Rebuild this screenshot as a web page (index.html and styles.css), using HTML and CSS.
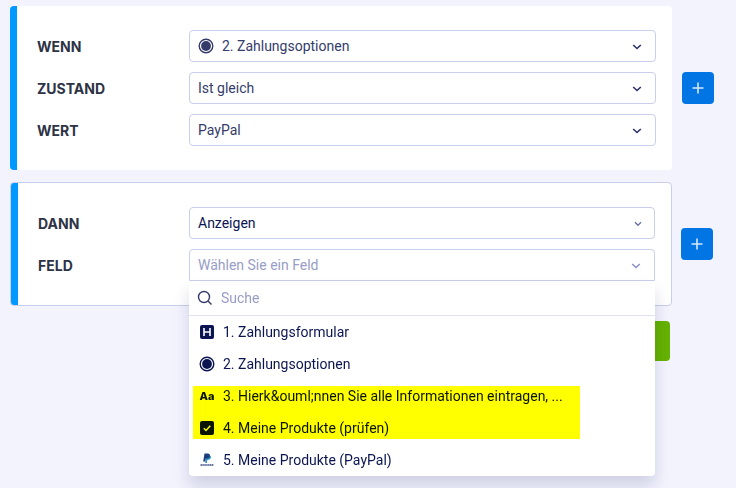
FILE: index.html
```html
<!DOCTYPE html>
<html lang="de">
<head>
    <meta charset="UTF-8">
    <meta name="viewport" content="width=device-width, initial-scale=1.0">
    <title>Bedingungen</title>
    <link rel="stylesheet" href="styles.css">
</head>
<body>
    <form class="conditions">
        <div class="rule">
            <div class="card">
                <div class="field">
                    <label class="label" for="when">WENN</label>
                    <div class="control">
                        <svg class="control-icon" viewBox="0 0 16 16" width="16" height="16"><circle cx="8" cy="8" r="6.8" fill="none" stroke="currentColor" stroke-width="1.4"/><circle cx="8" cy="8" r="4.9" fill="currentColor"/></svg>
                        <select class="select select-with-icon" id="when">
                            <option>2. Zahlungsoptionen</option>
                        </select>
                        <svg class="chevron" viewBox="0 0 10 6" width="10" height="6"><path d="M1.2 1 5 4.5 8.8 1"/></svg>
                    </div>
                </div>
                <div class="field">
                    <label class="label" for="state">ZUSTAND</label>
                    <div class="control">
                        <select class="select" id="state">
                            <option>Ist gleich</option>
                        </select>
                        <svg class="chevron" viewBox="0 0 10 6" width="10" height="6"><path d="M1.2 1 5 4.5 8.8 1"/></svg>
                    </div>
                </div>
                <div class="field">
                    <label class="label" for="value">WERT</label>
                    <div class="control">
                        <select class="select" id="value">
                            <option>PayPal</option>
                        </select>
                        <svg class="chevron" viewBox="0 0 10 6" width="10" height="6"><path d="M1.2 1 5 4.5 8.8 1"/></svg>
                    </div>
                </div>
            </div>
            <button class="add-button" type="button" aria-label="Bedingung hinzufügen">
                <svg viewBox="0 0 12 12" width="12" height="12"><path d="M6 .5v11M.5 6h11"/></svg>
            </button>
        </div>

        <div class="rule rule-then">
            <div class="card card-active">
                <div class="field">
                    <label class="label" for="then">DANN</label>
                    <div class="control">
                        <select class="select" id="then">
                            <option>Anzeigen</option>
                        </select>
                        <svg class="chevron chevron-thin" viewBox="0 0 10 6" width="10" height="6"><path d="M2 1.2 5 4.2 8 1.2"/></svg>
                    </div>
                </div>
                <div class="field">
                    <label class="label" for="target">FELD</label>
                    <div class="control">
                        <select class="select select-open" id="target">
                            <option>Wählen Sie ein Feld</option>
                        </select>
                        <svg class="chevron chevron-light" viewBox="0 0 10 6" width="10" height="6"><path d="M1.2 1 5 4.5 8.8 1"/></svg>

                        <div class="dropdown">
                            <div class="search">
                                <svg viewBox="0 0 16 16" width="16" height="16"><circle cx="7" cy="7" r="5.5"/><path d="m11 11 3.5 3.5"/></svg>
                                <input class="search-input" type="text" placeholder="Suche" aria-label="Suche">
                            </div>
                            <button class="item" type="button">
                                <svg viewBox="0 0 16 16" width="16" height="16"><rect x="1" y="1" width="14" height="14" rx="2" fill="currentColor"/><path d="M5 4v8M11 4v8M5 8h6" fill="none" stroke="#fff" stroke-width="1.6"/></svg>
                                <span>1. Zahlungsformular</span>
                            </button>
                            <button class="item" type="button">
                                <svg viewBox="0 0 16 16" width="16" height="16"><circle cx="8" cy="8" r="6.8" fill="none" stroke="currentColor" stroke-width="1.4"/><circle cx="8" cy="8" r="4.9" fill="currentColor"/></svg>
                                <span>2. Zahlungsoptionen</span>
                            </button>
                            <div class="marked">
                                <button class="item" type="button">
                                    <span class="text-icon">Aa</span>
                                    <span>3. Hierk&amp;ouml;nnen Sie alle Informationen eintragen, ...</span>
                                </button>
                                <button class="item" type="button">
                                    <svg viewBox="0 0 16 16" width="16" height="16"><rect x="1" y="1" width="14" height="14" rx="2" fill="currentColor"/><path d="m4.8 8.2 2.2 2.2 4.3-4.6" fill="none" stroke="#fff" stroke-width="1.4"/></svg>
                                    <span>4. Meine Produkte (prüfen)</span>
                                </button>
                            </div>
                            <button class="item" type="button">
                                <svg viewBox="0 0 16 16" width="16" height="16">
                                    <path d="M6.8 7.200 7.500 3.500h2.700c1.300 0 2 .8 1.700 2-.4 1.700-1.400 2.200-2.700 2.200H8.300L7.800 11H6.200z" fill="#2790c3"/>
                                    <path d="M5.500 1.500h3.300c1.700 0 2.400 1 2.100 2.400-.4 1.900-1.500 2.500-3 2.500H6.800L6.200 9.500H4.200z" fill="#1b3d7d"/>
                                    <path d="M1.500 13h13" fill="none" stroke="#6b77a3" stroke-width="1.800" stroke-dasharray="1.500 .4"/>
                                </svg>
                                <span>5. Meine Produkte (PayPal)</span>
                            </button>
                        </div>
                    </div>
                </div>
            </div>
            <button class="add-button" type="button" aria-label="Aktion hinzufügen">
                <svg viewBox="0 0 12 12" width="12" height="12"><path d="M6 .5v11M.5 6h11"/></svg>
            </button>
        </div>

        <div class="actions">
            <button class="save-button" type="submit" aria-label="Speichern"></button>
        </div>
    </form>
</body>
</html>
```
FILE: styles.css
```css
* {
    box-sizing: border-box;
}

body {
    margin: 0;
    min-height: 100vh;
    background-color: #f3f3fe;
    color: #0a1551;
    font-family: Roboto, 'Liberation Sans', sans-serif;
    font-size: 14px;
}

button, input, select {
    font: inherit;
    color: inherit;
}

.conditions {
    padding: 6px 22px 0 10px;
}

.rule {
    display: flex;
    align-items: center;
    gap: 10px;
    margin-bottom: 12px;
}

.rule-then {
    gap: 9px;
    padding-right: 1px;
    margin-bottom: 15px;
}

.card {
    flex: 1;
    display: grid;
    gap: 10px;
    padding: 24px 16px 24px 27px;
    border-radius: 4px;
    background: linear-gradient(to right, #0099ff 7px, #ffffff 7px);
    color: #343c6a;
}

.card-active {
    border: 1px solid #c8ceed;
    color: #0a1551;
}

.field {
    display: grid;
    grid-template-columns: 152px 1fr;
    align-items: center;
}

.card-active .field {
    grid-template-columns: 151px 1fr;
}

.label {
    color: #2c3345;
    font-family: Inter, 'Liberation Sans', sans-serif;
    font-weight: 700;
}

.control {
    position: relative;
}

.select {
    display: block;
    width: 100%;
    height: 32px;
    padding: 0 32px 0 8px;
    border: 1px solid #c8ceed;
    border-radius: 4px;
    background-color: #ffffff;
    appearance: none;
    cursor: pointer;
}

.select-with-icon {
    padding-left: 32px;
}

.select-open {
    border-radius: 4px 4px 0 0;
    color: #979dc6;
}

.control-icon {
    position: absolute;
    top: 8px;
    left: 9px;
    pointer-events: none;
}

.chevron {
    position: absolute;
    top: 14px;
    right: 14px;
    fill: none;
    stroke: #2b3268;
    stroke-width: 1.6;
    pointer-events: none;
}

.chevron-thin {
    right: 12px;
    stroke: #6a72a8;
    stroke-width: 1.4;
}

.chevron-light {
    stroke: #8d92c8;
}

.add-button {
    display: flex;
    align-items: center;
    justify-content: center;
    width: 32px;
    height: 32px;
    padding: 0;
    border: none;
    border-radius: 4px;
    background-color: #0075e3;
    cursor: pointer;
}

.add-button path {
    stroke: #d5e8fb;
    stroke-width: 1.6;
}

.dropdown {
    position: absolute;
    top: 100%;
    left: 0;
    right: 0;
    z-index: 1;
    border-radius: 0 0 4px 4px;
    background-color: #ffffff;
    box-shadow: 0 10px 16px rgba(10, 21, 81, 0.15);
}

.search {
    display: flex;
    align-items: center;
    gap: 8px;
    height: 35px;
    padding: 0 8px;
    border-bottom: 1px solid #e0e2f3;
}

.search svg {
    fill: none;
    stroke: #343c6a;
    stroke-width: 1.4;
}

.search-input {
    flex: 1;
    min-width: 0;
    padding: 0;
    border: none;
    outline: none;
    background: none;
}

.search-input::placeholder {
    color: #979dc6;
}

.item {
    display: flex;
    align-items: center;
    gap: 8px;
    width: 100%;
    height: 32px;
    padding: 0 10px;
    border: none;
    background: none;
    text-align: left;
    white-space: nowrap;
    cursor: pointer;
}

.item svg {
    flex: none;
}

.text-icon {
    width: 16px;
    font-family: Inter, 'Liberation Sans', sans-serif;
    font-size: 11px;
    font-weight: 800;
    text-align: center;
}

/* Highlighter over the marked entries */
.marked {
    position: relative;
}

.marked::after {
    content: '';
    position: absolute;
    top: 6px;
    bottom: 5px;
    left: 4px;
    width: 387px;
    background-color: #ffff00;
    mix-blend-mode: multiply;
    pointer-events: none;
}

.actions {
    display: flex;
    justify-content: flex-end;
    padding-right: 44px;
}

.save-button {
    width: 120px;
    height: 40px;
    border: none;
    border-radius: 4px;
    background-color: #64b200;
    cursor: pointer;
}
```
